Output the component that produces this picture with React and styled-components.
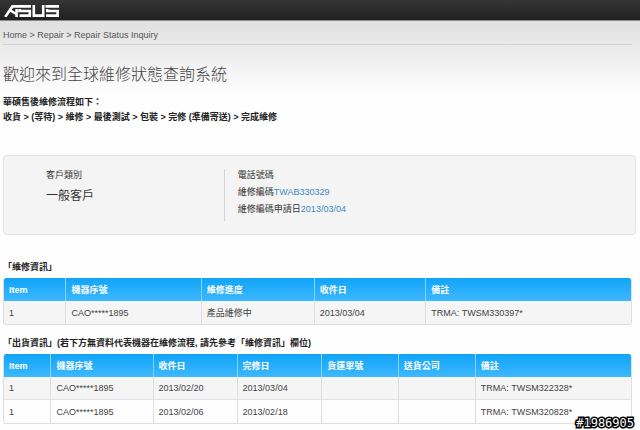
import React from 'react';
import styled, { createGlobalStyle } from 'styled-components';

const GlobalStyle = createGlobalStyle`
  * {
    box-sizing: border-box;
  }
  body {
    margin: 0;
    background: #fefefe;
    color: #333;
    font-family: 'Liberation Sans', 'Noto Sans CJK TC', sans-serif;
    font-size: 9px;
    line-height: 12px;
  }
`;

const Page = styled.div`
  position: relative;
  min-height: 100vh;
  background: linear-gradient(#dfdfdf, #fefefe) 0 20px / 100% 75px no-repeat;
`;

const TopBar = styled.header`
  height: 21px;
  padding: 5px 4px;
  background: linear-gradient(#353535, #202020);
  border-bottom: 1px solid #8b8787;
`;

const Logo = styled.svg`
  display: block;
  width: 55px;
  height: 12px;
`;

const Main = styled.main`
  padding: 0 4px 0 3px;
`;

const Breadcrumb = styled.nav`
  height: 24px;
  padding-top: 8px;
  margin-right: 4px;
  border-bottom: 1px solid #d4d4d4;
  color: #555;
`;

const Crumb = styled.a`
  color: inherit;
  text-decoration: none;
`;

const Title = styled.h1`
  margin: 18px 0 8px;
  color: #444;
  font-size: 16px;
  font-weight: 300;
  line-height: 24px;
`;

const Steps = styled.p`
  margin: 0;
  color: #222;
  font-weight: bold;
  line-height: 15px;
`;

const Panel = styled.section`
  display: flex;
  height: 80px;
  margin: 30px 0 26px;
  padding: 13px 0;
  background: #f4f4f4;
  border: 1px solid #e4e4e4;
  border-radius: 4px;
`;

const Customer = styled.div`
  width: 35%;
  padding-left: 42px;
  border-right: 1px solid #d4d4d4;
`;

const CustomerType = styled.div`
  margin-top: 6px;
  font-size: 12px;
  line-height: 18px;
`;

const Contact = styled.div`
  padding-left: 13px;
`;

const Line = styled.div`
  margin-bottom: 5px;
`;

const Value = styled.a`
  color: #3a8cc4;
  text-decoration: none;
`;

const Heading = styled.h2`
  margin: 0 0 5px;
  color: #222;
  font-size: 9px;
  line-height: 12px;
`;

const Table = styled.table`
  width: calc(100% - 4px);
  margin-bottom: 12px;
  table-layout: fixed;
  border: 1px solid #dedede;
  border-top: 0;
  border-radius: 3px;
  border-spacing: 0;
  overflow: hidden;
`;

const Th = styled.th`
  width: ${props => props.$width};
  height: 23px;
  padding: 0 5px;
  background: linear-gradient(#10a4f8, #3db8ff);
  color: #fff;
  text-align: left;
  & + & {
    border-left: 1px solid #8ad4fc;
  }
`;

const Td = styled.td`
  height: 23px;
  padding: 0 5px;
  border-bottom: 1px solid #e2e2e2;
  color: #444;
  tr:last-child > & {
    border-bottom: 0;
  }
  tr:nth-child(odd) > & {
    background: #f5f5f5;
  }
  & + & {
    border-left: 1px solid #dedede;
  }
`;

const Watermark = styled.div`
  position: absolute;
  right: 6px;
  bottom: 0;
  color: #fff;
  font: 12px/14px 'DejaVu Sans Mono', monospace;
  -webkit-text-stroke: 3px #000;
  paint-order: stroke fill;
`;

const repairs = {
  columns: [
    ['Item', '9.8%'],
    ['機器序號', '21.6%'],
    ['維修進度', '18%'],
    ['收件日', '17.8%'],
    ['備註', '32.8%'],
  ],
  rows: [['1', 'CAO*****1895', '產品維修中', '2013/03/04', 'TRMA: TWSM330397*']],
};

const shipments = {
  columns: [
    ['Item', '7.4%'],
    ['機器序號', '16.3%'],
    ['收件日', '13.4%'],
    ['完修日', '13.5%'],
    ['貨運單號', '12.2%'],
    ['送貨公司', '12.3%'],
    ['備註', '24.9%'],
  ],
  rows: [
    ['1', 'CAO*****1895', '2013/02/20', '2013/03/04', '', '', 'TRMA: TWSM322328*'],
    ['1', 'CAO*****1895', '2013/02/06', '2013/02/18', '', '', 'TRMA: TWSM320828*'],
  ],
};

const DataTable = ({ columns, rows, labelledBy }) => (
  <Table aria-labelledby={labelledBy}>
    <thead>
      <tr>
        {columns.map(([label, width]) => (
          <Th key={label} scope="col" $width={width}>{label}</Th>
        ))}
      </tr>
    </thead>
    <tbody>
      {rows.map((row, i) => (
        <tr key={i}>
          {row.map((cell, j) => (
            <Td key={j}>{cell}</Td>
          ))}
        </tr>
      ))}
    </tbody>
  </Table>
);

const App = () => (
  <Page lang="zh-Hant">
    <GlobalStyle />
    <TopBar>
      <Logo viewBox="0 0 55 12" role="img" aria-label="ASUS" fill="none" stroke="#fff" strokeWidth="2.6">
        <path d="M1.2 12 8.4 1.4H13M12.6 4V12M6.5 5.5 13 9.5" />
        <path d="M27 1.4H12.5M15.5 4V6H25.8V10.6H15.5" />
        <path d="M29.8 0V10.6H39.2V0" />
        <path d="M55 1.4H41.5M43.3 4V6H53.6V10.6H42" />
      </Logo>
    </TopBar>
    <Main>
      <Breadcrumb>
        <Crumb href="#home">Home</Crumb> &gt; <Crumb href="#repair">Repair</Crumb> &gt;{' '}
        <Crumb href="#status">Repair Status Inquiry</Crumb>
      </Breadcrumb>
      <Title>歡迎來到全球維修狀態查詢系統</Title>
      <Steps>華碩售後維修流程如下：</Steps>
      <Steps>收貨 &gt; (等待) &gt; 維修 &gt; 最後測試 &gt; 包裝 &gt; 完修 (準備寄送) &gt; 完成維修</Steps>
      <Panel>
        <Customer>
          <div>客戶類別</div>
          <CustomerType>一般客戶</CustomerType>
        </Customer>
        <Contact>
          <Line>電話號碼</Line>
          <Line>維修編碼<Value href="#repair-number">TWAB330329</Value></Line>
          <Line>維修編碼申請日<Value href="#request-date">2013/03/04</Value></Line>
        </Contact>
      </Panel>
      <Heading id="repairs">「維修資訊」</Heading>
      <DataTable {...repairs} labelledBy="repairs" />
      <Heading id="shipments">「出貨資訊」(若下方無資料代表機器在維修流程, 請先參考「維修資訊」欄位)</Heading>
      <DataTable {...shipments} labelledBy="shipments" />
    </Main>
    <Watermark>#1986905</Watermark>
  </Page>
);

export default App;
